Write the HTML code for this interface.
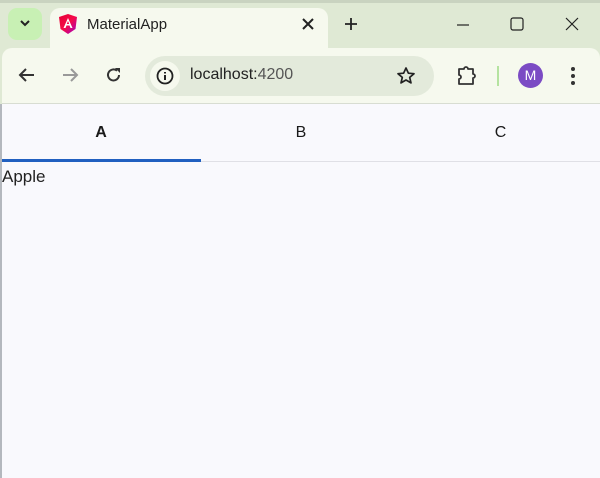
<!DOCTYPE html>
<html><head><style>
*{margin:0;padding:0;box-sizing:border-box}
body{width:600px;height:478px;overflow:hidden;background:#dfe9d4;font-family:"Liberation Sans",sans-serif;position:relative}
.a{position:absolute}
</style></head><body>
<div class="a" style="left:0;top:0;width:600px;height:3px;background:#c9d3c0"></div>
<div class="a" style="left:8px;top:8px;width:34px;height:32px;border-radius:9px;background:#c8f0b4"></div>
<svg class="a" style="left:19px;top:18px" width="12" height="10"><path d="M2 3l4 4 4-4" stroke="#222" stroke-width="2" fill="none"/></svg>
<div class="a" style="left:50px;top:8px;width:278px;height:44px;background:#f6f9ee;border-radius:10px 10px 0 0"></div>
<svg class="a" style="left:58px;top:13px" width="20" height="22" viewBox="0 0 20 22"><defs><linearGradient id="g" x1="0" y1="0" x2="1" y2="1"><stop offset="0" stop-color="#e40035"/><stop offset=".5" stop-color="#f60a48"/><stop offset="1" stop-color="#9c00c9"/></linearGradient></defs><path d="M10 1L1 4l1.5 12L10 21l7.5-5L19 4z" fill="url(#g)"/><path d="M10 5l-4.5 10h2l1-2.5h3l1 2.5h2zM8.8 11L10 8l1.2 3z" fill="#fff"/></svg>
<div class="a" style="left:87px;top:16px;font-size:15px;color:#222">MaterialApp</div>
<svg class="a" style="left:301px;top:17px" width="14" height="14"><path d="M2 2l10 10M12 2L2 12" stroke="#222" stroke-width="2"/></svg>
<svg class="a" style="left:344px;top:17px" width="14" height="14"><path d="M7 1v12M1 7h12" stroke="#222" stroke-width="1.8"/></svg>
<svg class="a" style="left:456px;top:18px" width="14" height="14"><path d="M1 7h12" stroke="#222" stroke-width="1.2"/></svg>
<svg class="a" style="left:510px;top:17px" width="14" height="14"><rect x="1" y="1" width="12" height="12" rx="2" stroke="#222" stroke-width="1.2" fill="none"/></svg>
<svg class="a" style="left:565px;top:17px" width="14" height="14"><path d="M1 1l12 12M13 1L1 13" stroke="#222" stroke-width="1.2"/></svg>
<div class="a" style="left:2px;top:48px;width:598px;height:56px;background:#f6f9ee;border-radius:10px 10px 0 0"></div>
<svg class="a" style="left:18px;top:67px" width="18" height="16"><path d="M16 8H3M8 2L2 8l6 6" stroke="#333" stroke-width="2" fill="none"/></svg>
<svg class="a" style="left:61px;top:67px" width="18" height="16"><path d="M2 8h13M10 2l6 6-6 6" stroke="#999" stroke-width="2" fill="none"/></svg>
<svg class="a" style="left:105px;top:66px" width="18" height="18"><path d="M14 9a5.5 5.5 0 1 1-2-4.3" stroke="#333" stroke-width="2" fill="none"/><path d="M10 2h5v5z" fill="#333"/></svg>
<div class="a" style="left:145px;top:56px;width:289px;height:40px;border-radius:20px;background:#e3eadb"></div>
<div class="a" style="left:150px;top:61px;width:30px;height:30px;border-radius:15px;background:#f6f9ee"></div>
<svg class="a" style="left:156px;top:67px" width="18" height="18"><circle cx="9" cy="9" r="7.5" stroke="#222" stroke-width="1.8" fill="none"/><path d="M9 8v5M9 5v1.5" stroke="#222" stroke-width="2"/></svg>
<div class="a" style="left:190px;top:66px;font-size:16px;color:#222">localhost:<span style="color:#555">4200</span></div>
<svg class="a" style="left:396px;top:66px" width="20" height="20"><path d="M10 2l2.4 5.2 5.6.5-4.3 3.7 1.3 5.5L10 14l-5 2.9 1.3-5.5L2 7.7l5.6-.5z" stroke="#222" stroke-width="1.7" fill="none" stroke-linejoin="round"/></svg>
<svg class="a" style="left:456px;top:65px" width="22" height="22"><path d="M3 4h5a2 2 0 0 1 4 0h5v5a2 2 0 0 1 0 4v6H3v-5a2 2 0 0 0 0-4z" stroke="#333" stroke-width="1.8" fill="none" stroke-linejoin="round"/></svg>
<div class="a" style="left:497px;top:66px;width:2px;height:20px;background:#b5e3a0"></div>
<div class="a" style="left:518px;top:63px;width:25px;height:25px;border-radius:13px;background:#7b4bc4;color:#fff;font-size:14px;text-align:center;line-height:25px">M</div>
<svg class="a" style="left:570px;top:66px" width="6" height="20"><circle cx="3" cy="3" r="2" fill="#333"/><circle cx="3" cy="10" r="2" fill="#333"/><circle cx="3" cy="17" r="2" fill="#333"/></svg>
<div class="a" style="left:2px;top:103px;width:598px;height:1px;background:#d8ddd2"></div>
<div class="a" style="left:2px;top:104px;width:598px;height:374px;background:#f9f9fd"></div>
<div class="a" style="left:0;top:104px;width:2px;height:374px;background:#b4b8be"></div>
<div class="a" style="left:2px;top:124px;width:198px;text-align:center;font-size:16px;font-weight:bold;color:#1a1a1a;-webkit-text-stroke:0">A</div>
<div class="a" style="left:201px;top:124px;width:200px;text-align:center;font-size:16px;color:#1a1a1a">B</div>
<div class="a" style="left:401px;top:124px;width:199px;text-align:center;font-size:16px;color:#1a1a1a">C</div>
<div class="a" style="left:2px;top:161px;width:598px;height:1px;background:#e0e0e6"></div>
<div class="a" style="left:2px;top:159px;width:199px;height:3px;background:#2160c0"></div>
<div class="a" style="left:2px;top:167px;font-size:17px;color:#222">Apple</div>
</body></html>
